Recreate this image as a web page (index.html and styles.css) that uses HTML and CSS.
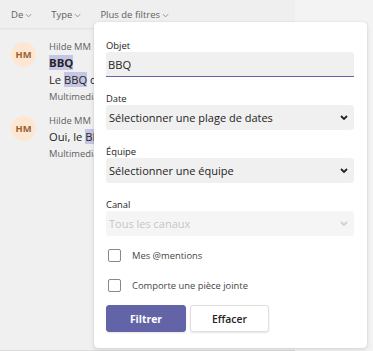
FILE: index.html
```html
<!DOCTYPE html>
<html lang="fr">
<head>
  <meta charset="UTF-8" />
  <title>Recherche - filtres</title>
  <link rel="stylesheet" href="styles.css">
</head>
<body>
  <div class="app">
    <section class="pane">
      <div class="filterbar">
        <span class="filter">De <svg class="chev" viewBox="0 0 8 5"><path d="M1 1l3 3 3-3"/></svg></span>
        <span class="filter">Type <svg class="chev" viewBox="0 0 8 5"><path d="M1 1l3 3 3-3"/></svg></span>
        <span class="filter">Plus de filtres <svg class="chev" viewBox="0 0 8 5"><path d="M1 1l3 3 3-3"/></svg></span>
      </div>
      <ul class="results">
        <li class="result">
          <div class="avatar">HM</div>
          <div class="result-body">
            <div class="author">Hilde MM</div>
            <div class="title"><mark>BBQ</mark></div>
            <div class="snippet">Le <mark>BBQ</mark> commence à 18h</div>
            <div class="where">Multimedia</div>
          </div>
        </li>
        <li class="result">
          <div class="avatar">HM</div>
          <div class="result-body">
            <div class="author">Hilde MM</div>
            <div class="snippet">Oui, le <mark>BBQ</mark> est confirmé</div>
            <div class="where">Multimedia</div>
          </div>
        </li>
      </ul>
    </section>
    <aside class="side"></aside>

    <form class="popup" onsubmit="return false">
      <div class="field">
        <label class="field-label">Objet</label>
        <input class="text-input" type="text" value="BBQ">
      </div>
      <div class="field">
        <span class="field-label">Date</span>
        <div class="dropdown">
          <span>Sélectionner une plage de dates</span>
          <svg class="drop-chev" viewBox="0 0 8 5"><path d="M1 1l3 3 3-3"/></svg>
        </div>
      </div>
      <div class="field">
        <span class="field-label">Équipe</span>
        <div class="dropdown">
          <span>Sélectionner une équipe</span>
          <svg class="drop-chev" viewBox="0 0 8 5"><path d="M1 1l3 3 3-3"/></svg>
        </div>
      </div>
      <div class="field">
        <span class="field-label">Canal</span>
        <div class="dropdown disabled">
          <span>Tous les canaux</span>
          <svg class="drop-chev" viewBox="0 0 8 5"><path d="M1 1l3 3 3-3"/></svg>
        </div>
      </div>
      <label class="check first"><span class="box"></span>Mes @mentions</label>
      <label class="check"><span class="box"></span>Comporte une pièce jointe</label>
      <div class="actions">
        <button class="btn primary" type="submit">Filtrer</button>
        <button class="btn" type="reset">Effacer</button>
      </div>
    </form>
  </div>
</body>
</html>
```

FILE: styles.css
```css
body {
  margin: 0;
  font-family: 'Open Sans', 'Noto Sans', sans-serif;
  color: #252423;
  background: #f3f3f3;
}
.app {
  position: relative;
  display: flex;
  width: 373px;
  height: 351px;
  overflow: hidden;
}
.pane {
  width: 295px;
  flex-shrink: 0;
  background: #f0f0f0;
  box-shadow: 1px 0 1px rgba(0, 0, 0, 0.06);
  border-bottom: 1px solid #dcdcdc;
  box-sizing: border-box;
}
.side {
  flex: 1;
  background: #f3f3f3;
}
.filterbar {
  display: flex;
  align-items: center;
  height: 28px;
  padding-left: 11px;
  gap: 19px;
  background: #efefef;
  box-shadow: 0 1px 2px rgba(0, 0, 0, 0.08);
  font-size: 9.5px;
  color: #616161;
}
.filter {
  display: flex;
  align-items: center;
  gap: 2px;
}
.chev {
  width: 7px;
  height: 5px;
  margin-top: 2px;
  fill: none;
  stroke: #7a7a7a;
  stroke-width: 0.9;
}
.results {
  list-style: none;
  margin: 0;
  padding: 12px 0 0 11px;
}
.result {
  display: flex;
  gap: 13px;
  margin-bottom: 9px;
}
.avatar {
  width: 25px;
  height: 25px;
  margin-top: 2px;
  border-radius: 50%;
  background: #fde7d2;
  color: #9a6232;
  font-size: 9.4px;
  font-weight: 700;
  display: flex;
  align-items: center;
  justify-content: center;
  flex-shrink: 0;
}
.result-body {
  white-space: nowrap;
}
.author {
  font-size: 9.4px;
  line-height: 14px;
  color: #616161;
}
.where {
  font-size: 9.4px;
  line-height: 17px;
  color: #616161;
}
.title {
  font-size: 11.4px;
  font-weight: 700;
  line-height: 17px;
}
.snippet {
  font-size: 11.2px;
  line-height: 17px;
}
mark {
  background: #c5c5e6;
  color: inherit;
}
.popup {
  position: absolute;
  left: 94px;
  top: 22px;
  width: 273px;
  height: 326px;
  box-sizing: border-box;
  margin: 0;
  padding: 17px 13px 0 12px;
  background: #fff;
  border-radius: 4px;
  box-shadow: 0 0 1px rgba(0, 0, 0, 0.25), 0 2px 5px rgba(0, 0, 0, 0.1);
}
.field {
  display: flex;
  flex-direction: column;
  margin-bottom: 15px;
}
.field-label {
  font-size: 9.4px;
  line-height: 13px;
  color: #252423;
}
.text-input {
  height: 25px;
  box-sizing: border-box;
  border: none;
  border-bottom: 1px solid #6264a7;
  border-radius: 3px 3px 0 0;
  background: #f0f0f0;
  padding: 0 2px;
  font-family: inherit;
  font-size: 11.2px;
  color: #252423;
  outline: none;
}
.dropdown {
  display: flex;
  align-items: center;
  justify-content: space-between;
  height: 25px;
  padding: 0 6px 0 3px;
  border-radius: 3px;
  background: #f0f0f0;
  font-size: 11px;
}
.drop-chev {
  width: 8px;
  height: 5px;
  fill: none;
  stroke: #252423;
  stroke-width: 1.8;
}
.dropdown.disabled {
  background: #f5f5f5;
  color: #c8c6c4;
}
.dropdown.disabled .drop-chev {
  stroke: #d2d0ce;
}
.check {
  display: flex;
  align-items: center;
  height: 20px;
  padding-left: 2px;
  gap: 11px;
  font-size: 9.4px;
  color: #484644;
  margin-bottom: 10px;
}
.check.first {
  margin-top: -6px;
}
.box {
  width: 13px;
  height: 13px;
  box-sizing: border-box;
  border: 1px solid #8a8886;
  border-radius: 2px;
}
.actions {
  display: flex;
  gap: 4px;
  margin-top: 1px;
}
.btn {
  width: 79px;
  height: 27px;
  border: 1px solid #e1dfdd;
  border-radius: 3px;
  background: #fff;
  font-family: inherit;
  font-size: 10.4px;
  font-weight: 600;
  color: #252423;
  box-shadow: 0 1px 2px rgba(0, 0, 0, 0.1);
}
.btn.primary {
  width: 80px;
  border-color: #6264a7;
  background: #6264a7;
  color: #fff;
  font-weight: 700;
}
```
